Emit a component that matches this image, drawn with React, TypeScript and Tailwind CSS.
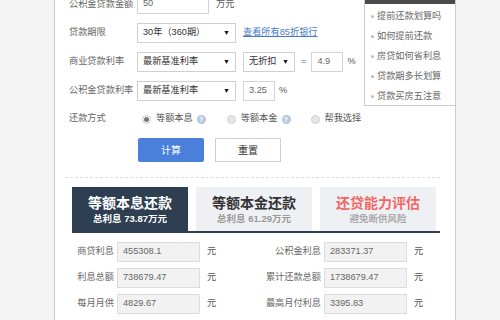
import React from "react";

const font = { fontFamily: '"Liberation Sans", "Noto Sans CJK SC", sans-serif' };

const Select = ({ text, w }: { text: string; w: string }) => (
  <div
    className={`${w} flex h-[20px] items-center justify-between border border-[#cfcfcf] bg-white pl-[5px] pr-[5px] text-[#333]`}
  >
    <span>{text}</span>
    <span className="text-[7px] text-[#111]">▼</span>
  </div>
);

const Input = ({ value, w }: { value: string; w: string }) => (
  <div
    className={`${w} flex h-[20px] items-center border border-[#d4d4d4] bg-white pl-[5px] text-[#666]`}
  >
    {value}
  </div>
);

const Help = () => (
  <span className="ml-[4px] flex h-[9px] w-[9px] items-center justify-center rounded-full bg-[#b4c9de] text-[7px] font-bold leading-none text-white">
    ?
  </span>
);

const Radio = ({ on }: { on?: boolean }) => (
  <span
    className={`mr-[5px] flex h-[9px] w-[9px] items-center justify-center rounded-full border ${
      on ? "border-[#c8c8c8] bg-white" : "border-[#d0d0d0] bg-[#e6e6e6]"
    }`}
  >
    {on && <span className="h-[5px] w-[5px] rounded-full bg-[#777]" />}
  </span>
);

const Result = ({
  label,
  value,
  lw,
}: {
  label: string;
  value: string;
  lw: string;
}) => (
  <div className="flex items-center">
    <span className={`${lw} text-right text-[#666]`}>{label}</span>
    <div className="ml-[3px] flex h-[20px] w-[83px] items-center border border-[#dcdcdc] bg-[#f2f2f2] pl-[5px] text-[#666]">
      {value}
    </div>
    <span className="ml-[7px] text-[#555]">元</span>
  </div>
);

const tips = [
  "提前还款划算吗",
  "如何提前还款",
  "房贷如何省利息",
  "贷款期多长划算",
  "贷款买房五注意",
];

const results: [string, string, string, string][] = [
  ["商贷利息", "455308.1", "公积金利息", "283371.37"],
  ["利息总额", "738679.47", "累计还款总额", "1738679.47"],
  ["每月月供", "4829.67", "最高月付利息", "3395.83"],
];

export default function App() {
  return (
    <div
      className="flex h-[320px] w-[500px] overflow-hidden bg-[#f4f4f4] text-[9.2px]"
      style={font}
    >
      <div className="w-[54px] shrink-0" />
      <div className="flex w-[402px] shrink-0 flex-col border-x border-[#cccccc] bg-white">
        <div className="flex">
          <div className="-mt-[4px] flex w-[309px] flex-col pl-[14px]">
            <div className="flex h-[18px] items-center">
              <span className="w-[68px] text-[#666]">公积金贷款金额</span>
              <div className="-mt-[2px]">
                <Input value="50" w="w-[72px]" />
              </div>
              <span className="ml-[7px] text-[#555]">万元</span>
            </div>
            <div className="mt-[9px] flex h-[20px] items-center">
              <span className="w-[68px] text-[#666]">贷款期限</span>
              <Select text="30年（360期）" w="w-[99px]" />
              <span className="ml-[7px] text-[#4a7bc8] underline">
                查看所有85折银行
              </span>
            </div>
            <div className="mt-[9px] flex h-[20px] items-center">
              <span className="w-[68px] text-[#666]">商业贷款利率</span>
              <Select text="最新基准利率" w="w-[99px]" />
              <div className="ml-[7px]">
                <Select text="无折扣" w="w-[52px]" />
              </div>
              <span className="ml-[6px] text-[#555]">=</span>
              <div className="ml-[5px]">
                <Input value="4.9" w="w-[32px]" />
              </div>
              <span className="ml-[4px] text-[#555]">%</span>
            </div>
            <div className="mt-[9px] flex h-[20px] items-center">
              <span className="w-[68px] text-[#666]">公积金贷款利率</span>
              <Select text="最新基准利率" w="w-[99px]" />
              <div className="ml-[7px]">
                <Input value="3.25" w="w-[32px]" />
              </div>
              <span className="ml-[4px] text-[#555]">%</span>
            </div>
            <div className="mt-[8px] flex h-[20px] items-center text-[#555]">
              <span className="w-[73px] text-[#666]">还款方式</span>
              <Radio on />
              <span>等额本息</span>
              <Help />
              <span className="ml-[21px]" />
              <Radio />
              <span>等额本金</span>
              <Help />
              <span className="ml-[20px]" />
              <Radio />
              <span>帮我选择</span>
            </div>
            <div className="mt-[9px] flex pl-[69px]">
              <div className="flex h-[24px] w-[66px] items-center justify-center rounded-[2px] bg-[#4a80dc] text-[10px] text-white">
                计算
              </div>
              <div className="ml-[11px] flex h-[24px] w-[66px] items-center justify-center border border-[#cfcfcf] bg-white text-[10px] text-[#333]">
                重置
              </div>
            </div>
          </div>
          <div className="ml-auto h-[106px] w-[91px] border-b border-l border-[#cccccc]">
            <div className="h-[4px] bg-[#4b4b4b]" />
            <ul className="flex flex-col gap-[9.5px] pl-[6px] pt-[7px] text-[#666]">
              {tips.map((t) => (
                <li key={t} className="flex items-center leading-[10.5px]">
                  <span className="mr-[3px] h-[3px] w-[3px] rounded-full bg-[#bbb]" />
                  {t}
                </li>
              ))}
            </ul>
          </div>
        </div>

        <div className="ml-[10px] mt-[15px] w-[375px] border-t border-dashed border-[#dddddd]" />

        <div className="ml-[17px] mt-[9px] flex w-[368px] gap-[8px] border-b-2 border-[#2e3e50]">
          <div className="flex h-[44px] w-[116px] flex-col items-center justify-center bg-[#2e3f51]">
            <span className="text-[14px] font-bold leading-[18px] text-white">
              等额本息还款
            </span>
            <span className="text-[9.5px] font-bold leading-[13px] text-white">
              总利息 73.87万元
            </span>
          </div>
          <div className="flex h-[44px] w-[116px] flex-col items-center justify-center bg-[#eef0f3]">
            <span className="text-[14px] font-bold leading-[18px] text-[#333]">
              等额本金还款
            </span>
            <span className="text-[9.5px] font-bold leading-[13px] text-[#999]">
              总利息 61.29万元
            </span>
          </div>
          <div className="flex h-[44px] w-[116px] flex-col items-center justify-center bg-[#eef0f3]">
            <span className="text-[14px] font-bold leading-[18px] text-[#f26666]">
              还贷能力评估
            </span>
            <span className="text-[9.5px] font-bold leading-[13px] text-[#aaa]">
              避免断供风险
            </span>
          </div>
        </div>

        <div className="mt-[9px] flex flex-col gap-[6px]">
          {results.map(([l1, v1, l2, v2]) => (
            <div key={l1} className="flex">
              <div className="ml-[17px] w-[178px]">
                <Result label={l1} value={v1} lw="w-[42px]" />
              </div>
              <Result label={l2} value={v2} lw="w-[71px]" />
            </div>
          ))}
        </div>
      </div>
    </div>
  );
}
